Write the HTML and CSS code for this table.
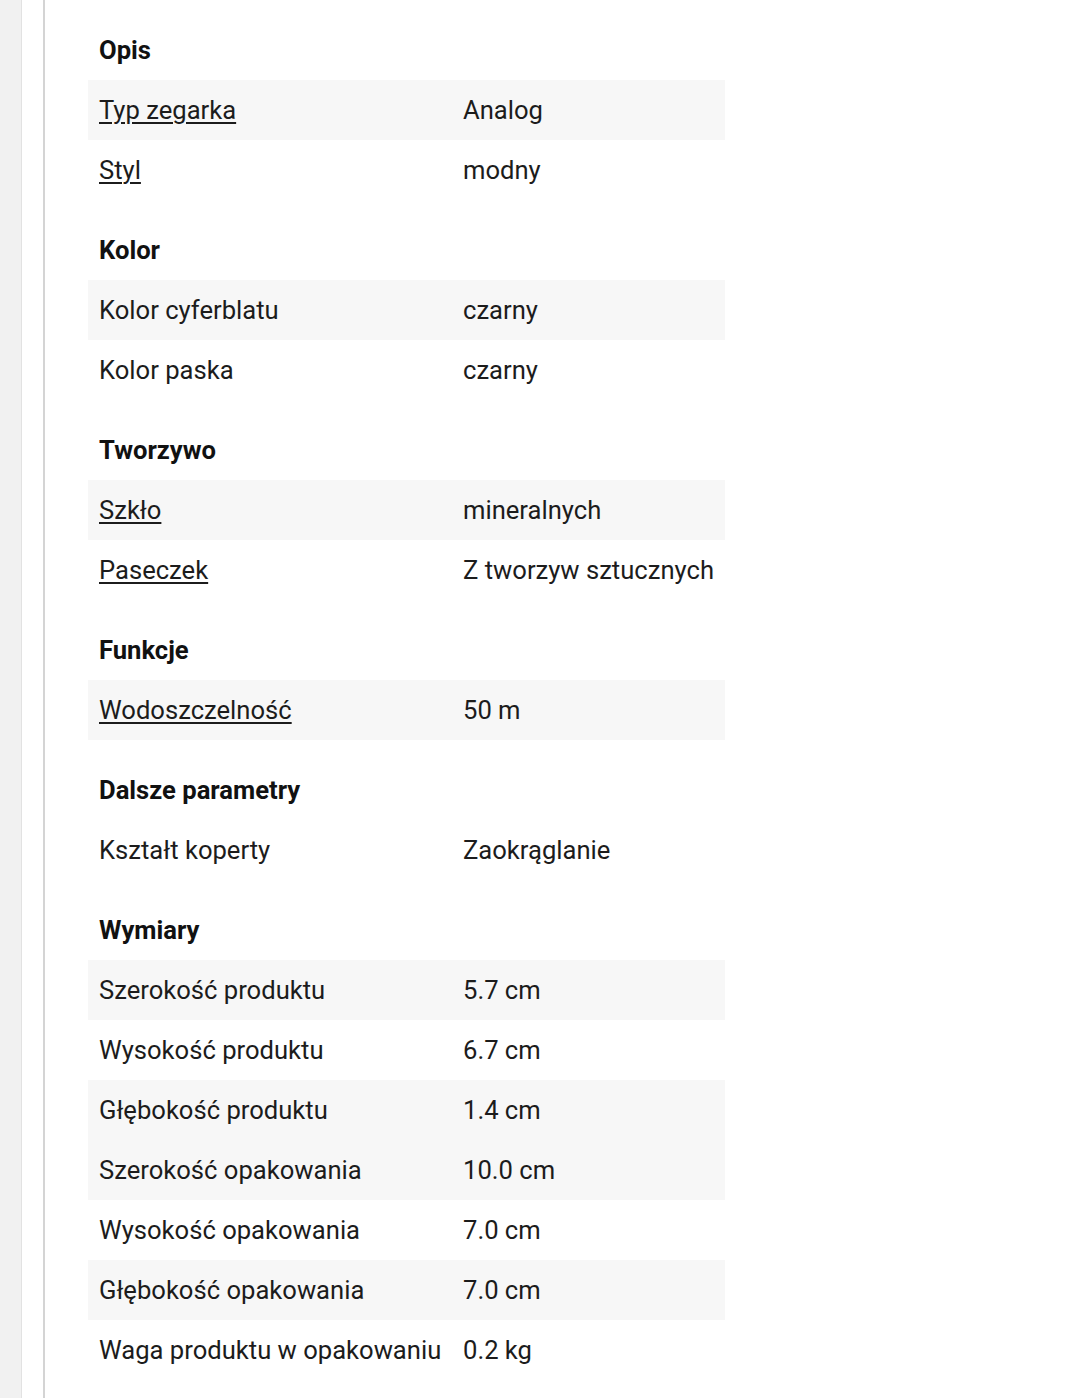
FILE: index.html
```html
<!DOCTYPE html>
<html lang="pl">
<head>
<meta charset="utf-8">
<title>Opis</title>
<link rel="stylesheet" href="styles.css">
</head>
<body>
<div class="page">
  <div class="side-strip"></div>
  <div class="side-gap"></div>
  <main class="content">
    <section class="group">
      <h2 class="group-title">Opis</h2>
      <div class="row shaded"><div class="label"><a class="term">Typ zegarka</a></div><div class="value">Analog</div></div>
      <div class="row"><div class="label"><a class="term">Styl</a></div><div class="value">modny</div></div>
    </section>
    <section class="group">
      <h2 class="group-title">Kolor</h2>
      <div class="row shaded"><div class="label">Kolor cyferblatu</div><div class="value">czarny</div></div>
      <div class="row"><div class="label">Kolor paska</div><div class="value">czarny</div></div>
    </section>
    <section class="group">
      <h2 class="group-title">Tworzywo</h2>
      <div class="row shaded"><div class="label"><a class="term">Szkło</a></div><div class="value">mineralnych</div></div>
      <div class="row"><div class="label"><a class="term">Paseczek</a></div><div class="value">Z tworzyw sztucznych</div></div>
    </section>
    <section class="group">
      <h2 class="group-title">Funkcje</h2>
      <div class="row shaded"><div class="label"><a class="term">Wodoszczelność</a></div><div class="value">50 m</div></div>
    </section>
    <section class="group">
      <h2 class="group-title">Dalsze parametry</h2>
      <div class="row"><div class="label">Kształt koperty</div><div class="value">Zaokrąglanie</div></div>
    </section>
    <section class="group">
      <h2 class="group-title">Wymiary</h2>
      <div class="row shaded"><div class="label">Szerokość produktu</div><div class="value">5.7 cm</div></div>
      <div class="row"><div class="label">Wysokość produktu</div><div class="value">6.7 cm</div></div>
      <div class="row shaded"><div class="label">Głębokość produktu</div><div class="value">1.4 cm</div></div>
      <div class="row shaded"><div class="label">Szerokość opakowania</div><div class="value">10.0 cm</div></div>
      <div class="row"><div class="label">Wysokość opakowania</div><div class="value">7.0 cm</div></div>
      <div class="row shaded"><div class="label">Głębokość opakowania</div><div class="value">7.0 cm</div></div>
      <div class="row"><div class="label">Waga produktu w opakowaniu</div><div class="value">0.2 kg</div></div>
    </section>
  </main>
</div>
</body>
</html>
```

FILE: styles.css
```css
html, body {
  margin: 0;
  padding: 0;
  background: #ffffff;
}

body {
  font-family: Roboto, "Noto Sans", "Liberation Sans", sans-serif;
  color: #1c1c1c;
  font-size: 25.6px;
}

.page {
  display: flex;
  min-height: 1398px;
}

.side-strip {
  width: 21px;
  flex: none;
  background: #f1f1f1;
  border-right: 1px solid #e2e2e2;
}

.side-gap {
  width: 21px;
  flex: none;
  background: #ffffff;
  border-right: 2px solid #d4d4d4;
}

.content {
  flex: 1;
  padding-left: 43px;
}

.group {
  margin-top: 20px;
}

.group-title {
  margin: 0;
  height: 60px;
  line-height: 60px;
  padding-left: 11px;
  font-size: 25.6px;
  font-weight: 700;
  color: #111111;
}

.row {
  display: grid;
  grid-template-columns: 364px 273px;
  width: 637px;
  height: 60px;
  align-items: center;
}

.row.shaded {
  background: #f7f7f7;
}

.label,
.value {
  padding-left: 11px;
  line-height: 60px;
  white-space: nowrap;
}

.term {
  color: inherit;
  text-decoration: underline;
  text-underline-offset: 3px;
  text-decoration-thickness: 2px;
}
```
